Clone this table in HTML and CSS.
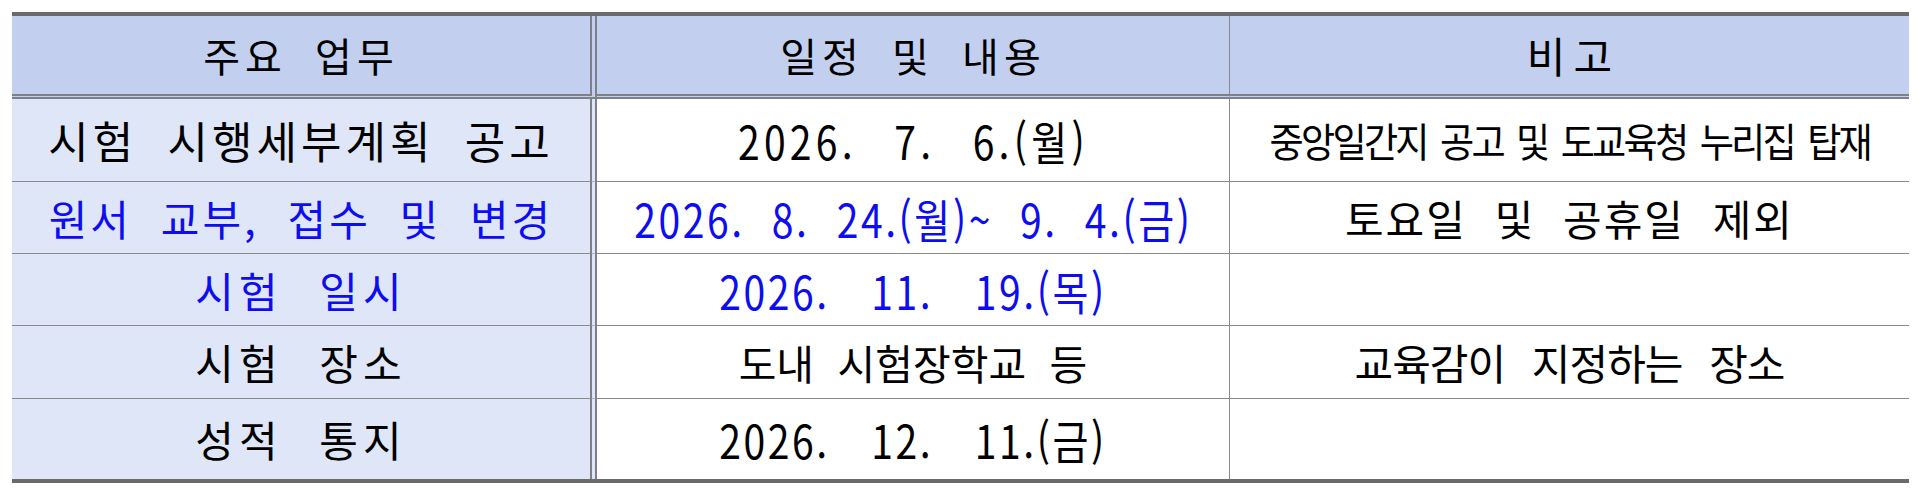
FILE: index.html
```html
<!DOCTYPE html>
<html lang="ko">
<head>
<meta charset="utf-8">
<link rel="stylesheet" href="styles.css">
</head>
<body>
<div class="sheet">
  <div class="cell head c1"><span class="t-head">주요 업무</span></div>
  <div class="cell head c2"><span class="t-head">일정 및 내용</span></div>
  <div class="cell head c3"><span class="t-head2">비고</span></div>

  <div class="cell side c1"><span class="t-big">시험 시행세부계획 공고</span></div>
  <div class="cell c2"><span class="cond t-date">2026. 7. 6.(월)</span></div>
  <div class="cell c3"><span class="t-note">중앙일간지 공고 및 도교육청 누리집 탑재</span></div>

  <div class="cell side c1"><span class="t-blue t-wide">원서 교부, 접수 및 변경</span></div>
  <div class="cell c2"><span class="cond t-blue t-range">2026. 8. 24.(월)~ 9. 4.(금)</span></div>
  <div class="cell c3"><span class="t-mid">토요일 및 공휴일 제외</span></div>

  <div class="cell side c1"><span class="t-blue t-short">시험 일시</span></div>
  <div class="cell c2"><span class="cond t-blue t-date2">2026. 11. 19.(목)</span></div>
  <div class="cell c3"></div>

  <div class="cell side c1"><span class="t-short">시험 장소</span></div>
  <div class="cell c2"><span class="t-place">도내 시험장학교 등</span></div>
  <div class="cell c3"><span class="t-note2">교육감이 지정하는 장소</span></div>

  <div class="cell side c1 last"><span class="t-short">성적 통지</span></div>
  <div class="cell c2 last"><span class="cond t-date2">2026. 12. 11.(금)</span></div>
  <div class="cell c3 last"></div>
</div>
</body>
</html>
```

FILE: styles.css
```css
html, body {
  margin: 0;
  padding: 0;
  background: #ffffff;
}

body {
  font-family: "Noto Sans CJK KR", "Noto Sans", sans-serif;
  color: #000000;
}

.sheet {
  margin: 12px 0 0 12px;
  width: 1897px;
  display: grid;
  grid-template-columns: 585px 633px 679px;
  grid-template-rows: 83px 83px 72px 72px 73px 80px;
  border-top: 4px solid #6b6b6b;
  border-bottom: 4px solid #6b6b6b;
}

.cell {
  box-sizing: border-box;
  display: flex;
  align-items: center;
  justify-content: center;
  border-bottom: 1px solid #8a8a8a;
  white-space: nowrap;
  line-height: 1;
}

.cell.last {
  border-bottom: none;
}

.c1 {
  border-right: 7px double #7e8088;
}

.c2 {
  border-right: 1px solid #8a8a8a;
}

.head {
  background: #c2cfee;
  border-bottom: 5px double #7e8088;
}

.side {
  background: #dee6f7;
}

.cond {
  display: inline-block;
  transform: scaleX(0.85);
}

.t-head {
  font-size: 40px;
  letter-spacing: 5px;
  word-spacing: 12px;
}

.t-head2 {
  font-size: 42px;
  letter-spacing: 8px;
  margin-left: 8px;
}

.t-big {
  font-size: 44px;
  letter-spacing: 4px;
  word-spacing: 14px;
}

.t-blue {
  color: #0d0df0;
}

.t-wide {
  font-size: 42px;
  letter-spacing: 3px;
  word-spacing: 14px;
}

.t-short {
  font-size: 42px;
  letter-spacing: 5px;
  word-spacing: 20px;
}

.t-date {
  font-size: 46px;
  letter-spacing: 5px;
  word-spacing: 26px;
}

.t-range {
  font-size: 46px;
  letter-spacing: 3px;
  word-spacing: 16px;
}

.t-date2 {
  font-size: 46px;
  letter-spacing: 3px;
  word-spacing: 33px;
}

.t-place {
  font-size: 41px;
  word-spacing: 12px;
}

.t-note {
  display: inline-block;
  font-size: 40px;
  letter-spacing: -3px;
  word-spacing: 6px;
  transform: scaleX(0.93);
}

.t-mid {
  font-size: 42px;
  letter-spacing: 2px;
  word-spacing: 14px;
}

.t-note2 {
  font-size: 42px;
  letter-spacing: -1px;
  word-spacing: 16px;
}
```
